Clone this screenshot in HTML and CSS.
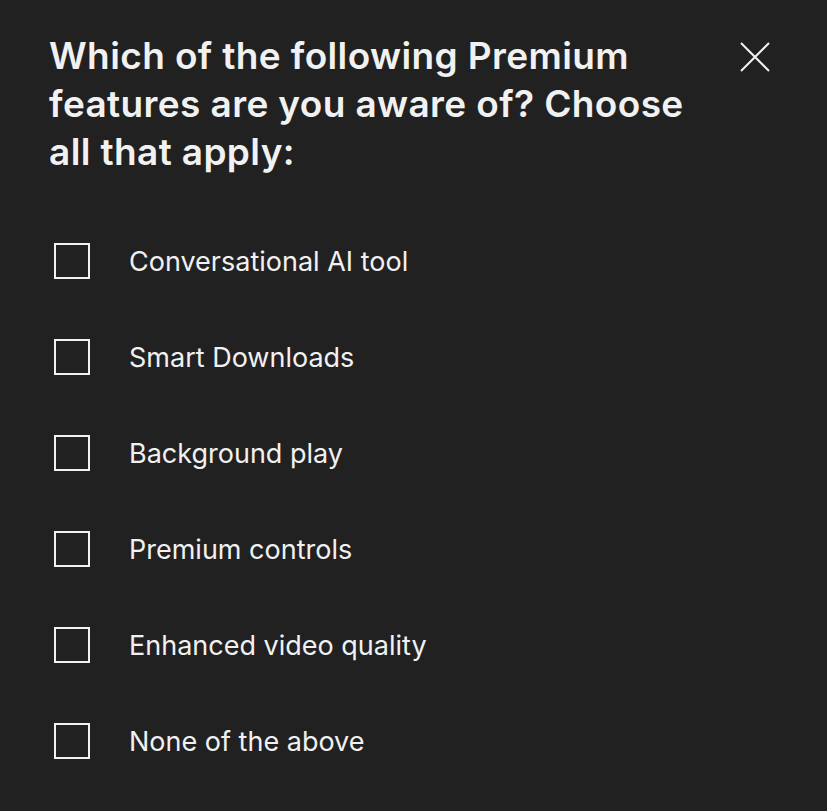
FILE: index.html
```html
<!DOCTYPE html>
<html lang="en">
<head>
  <meta charset="UTF-8">
  <title>Survey</title>
  <link rel="stylesheet" href="styles.css">
</head>
<body>
  <div class="survey">
    <div class="survey-header">
      <h1>Which of the following Premium features are you aware of? Choose all that apply:</h1>
      <button class="close" aria-label="Close">
        <svg width="32" height="32" viewBox="0 0 32 32">
          <path d="M2 2 L30 30 M30 2 L2 30" stroke="#f1f1f1" stroke-width="2" fill="none"/>
        </svg>
      </button>
    </div>

    <ul class="options">
      <li><span class="box"></span>Conversational AI tool</li>
      <li><span class="box"></span>Smart Downloads</li>
      <li><span class="box"></span>Background play</li>
      <li><span class="box"></span>Premium controls</li>
      <li><span class="box"></span>Enhanced video quality</li>
      <li><span class="box"></span>None of the above</li>
    </ul>
  </div>
</body>
</html>
```

FILE: styles.css
```css
body {
  margin: 0;
  background-color: #212121;
  color: #f1f1f1;
  font-family: Inter, "Noto Sans", sans-serif;
}

.survey {
  padding: 32px 56px 0 49px;
}

.survey-header {
  display: flex;
  justify-content: space-between;
  align-items: flex-start;
}

h1 {
  margin: 0;
  width: 660px;
  font-size: 37px;
  line-height: 48px;
  font-weight: 600;
  letter-spacing: 0.38px;
}

.close {
  background: none;
  border: none;
  padding: 0;
  margin-top: 9px;
  cursor: pointer;
}

.close svg {
  display: block;
}

.options {
  list-style: none;
  margin: 67px 0 0 5px;
  padding: 0;
}

.options li {
  display: flex;
  align-items: center;
  height: 36px;
  margin-bottom: 60px;
  font-size: 27px;
}

.box {
  width: 32px;
  height: 32px;
  border: 2px solid #f1f1f1;
  margin-right: 39px;
  flex-shrink: 0;
}
```
